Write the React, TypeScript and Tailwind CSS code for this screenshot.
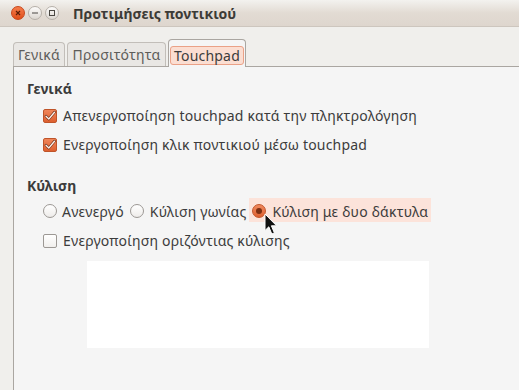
const font = "font-['Noto_Sans','DejaVu_Sans',sans-serif]"

function CheckBox({ checked }: { checked: boolean }) {
  if (!checked) {
    return (
      <span className="w-[14px] h-[14px] shrink-0 rounded-[2px] border border-[#9c9894] bg-gradient-to-b from-[#ffffff] to-[#f1efed]" />
    )
  }
  return (
    <span className="w-[14px] h-[14px] shrink-0 rounded-[2px] border border-[#bf5429] bg-gradient-to-b from-[#f0865a] to-[#dd5f2e] flex items-center justify-center">
      <svg width="12" height="12" viewBox="0 0 12 12">
        <path d="M2 6.2 L4.8 9 L10.5 2.2" fill="none" stroke="#6b2a12" strokeWidth="2.6" strokeLinecap="round" strokeLinejoin="round" />
        <path d="M2 6.2 L4.8 9 L10.5 2.2" fill="none" stroke="#fbeee8" strokeWidth="1.4" strokeLinecap="round" strokeLinejoin="round" />
      </svg>
    </span>
  )
}

function Radio({ checked }: { checked: boolean }) {
  if (!checked) {
    return (
      <span className="w-[14px] h-[14px] shrink-0 rounded-full border border-[#9c9894] bg-gradient-to-b from-[#ffffff] to-[#eeecea]" />
    )
  }
  return (
    <span className="w-[14px] h-[14px] shrink-0 rounded-full border border-[#c2552a] bg-gradient-to-b from-[#f08a5e] to-[#dd5f2e] flex items-center justify-center">
      <span className="w-[6px] h-[6px] rounded-full bg-[#7a2e12]" />
    </span>
  )
}

function WindowButton({ kind }: { kind: 'close' | 'min' | 'max' }) {
  if (kind === 'close') {
    return (
      <span className="w-[14px] h-[14px] rounded-full bg-gradient-to-b from-[#f57c4a] to-[#df4e17] border border-[#c8461a] flex items-center justify-center">
        <svg width="6" height="6" viewBox="0 0 6 6">
          <path d="M1 1 L5 5 M5 1 L1 5" stroke="#5a1e08" strokeWidth="1.2" />
        </svg>
      </span>
    )
  }
  return (
    <span className="w-[14px] h-[14px] rounded-full bg-gradient-to-b from-[#fdfcfb] to-[#dcd7d1] border border-[#b6b0a9] flex items-center justify-center">
      <svg width="8" height="8" viewBox="0 0 8 8">
        {kind === 'min' ? (
          <path d="M1 4 H7" stroke="#4a4742" strokeWidth="1" />
        ) : (
          <rect x="1.5" y="1.5" width="5" height="5" fill="none" stroke="#4a4742" strokeWidth="1" />
        )}
      </svg>
    </span>
  )
}

export default function App() {
  return (
    <div className={`w-[519px] h-[390px] overflow-hidden bg-[#f0efec] flex flex-col text-[14px] text-[#3c3c3c] ${font}`}>
      <div className="h-[27px] shrink-0 flex items-center pl-[11px] bg-gradient-to-b from-[#f3f2ef] via-[#e2dbd3] to-[#ded6ce] border-b border-[#cdc6be]">
        <div className="flex items-center gap-[3px]">
          <WindowButton kind="close" />
          <WindowButton kind="min" />
          <WindowButton kind="max" />
        </div>
        <span className="ml-[14px] font-bold text-[14px] text-[#3c3b37]">Προτιμήσεις ποντικιού</span>
      </div>

      <div className="flex items-end pl-[13px] pt-[12px] gap-[2px] tracking-[0.2px]">
        <div className="h-[24px] w-[52px] rounded-t-[4px] border border-b-0 border-[#c2beb9] bg-[#e9e7e4] flex items-center justify-center text-[#5e5d5a]">Γενικά</div>
        <div className="h-[24px] w-[99px] rounded-t-[4px] border border-b-0 border-[#c2beb9] bg-[#e9e7e4] flex items-center justify-center text-[#5e5d5a]">Προσιτότητα</div>
        <div className="h-[28px] w-[78px] rounded-t-[4px] border border-b-0 border-[#aaa6a1] bg-[#f5f5f5] flex items-start justify-center pt-[6px] relative -mb-px z-10">
          <span className="h-[19px] px-[3px] flex items-center rounded-[3px] border border-[#eaa187] bg-[#fbded2] text-[#3c3c3c]">Touchpad</span>
        </div>
      </div>

      <div className="flex-1 ml-[13px] border-l border-t border-[#aaa6a1] bg-[#f5f5f5] pl-[13px] pt-[11px] tracking-[0.2px]">
        <div className="h-[20px] flex items-center font-bold tracking-normal">Γενικά</div>
        <div className="pl-[16px] mt-[3px]">
          <label className="h-[29px] flex items-center gap-[6px]">
            <CheckBox checked />
            <span>Απενεργοποίηση touchpad κατά την πληκτρολόγηση</span>
          </label>
          <label className="h-[29px] flex items-center gap-[6px]">
            <CheckBox checked />
            <span>Ενεργοποίηση κλικ ποντικιού μέσω touchpad</span>
          </label>
        </div>

        <div className="h-[20px] mt-[16px] flex items-center font-bold tracking-normal">Κύλιση</div>
        <div className="pl-[16px] mt-[3px]">
          <div className="h-[24px] flex items-center">
            <label className="flex items-center gap-[5px] pt-[2px]">
              <Radio checked={false} />
              <span>Ανενεργό</span>
            </label>
            <label className="flex items-center gap-[6px] ml-[6px] pt-[2px]">
              <Radio checked={false} />
              <span>Κύλιση γωνίας</span>
            </label>
            <label className="relative flex items-center gap-[6px] ml-[3px] h-[24px] pl-[3px] pr-[3px] pt-[2px] bg-[#fce3da]">
              <Radio checked />
              <span>Κύλιση με δυο δάκτυλα</span>
              <svg className="absolute left-[15px] top-[15px]" width="14" height="23" viewBox="0 0 14 23">
                <path d="M1 1 L1 17.5 L4.8 13.8 L7.8 21 L10.4 19.9 L7.4 12.8 L12.6 12.8 Z" fill="#111" stroke="#fff" strokeWidth="1" strokeLinejoin="round" />
              </svg>
            </label>
          </div>
          <label className="h-[29px] mt-[4px] flex items-center gap-[6px]">
            <CheckBox checked={false} />
            <span>Ενεργοποίηση οριζόντιας κύλισης</span>
          </label>
          <div className="ml-[44px] mt-[6px] w-[342px] h-[87px] bg-white" />
        </div>
      </div>
    </div>
  )
}
